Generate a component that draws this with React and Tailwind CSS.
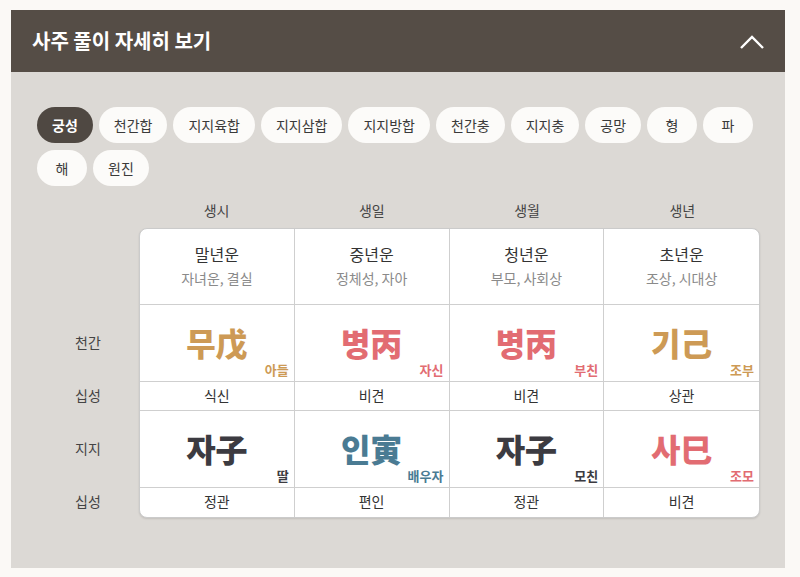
import React from "react";

const FONT = { fontFamily: '"Noto Sans CJK KR", "Noto Sans", sans-serif' };

const chips = ["궁성", "천간합", "지지육합", "지지삼합", "지지방합", "천간충", "지지충", "공망", "형", "파", "해", "원진"];

const cols = [
  { head: "생시", t1: "말년운", t2: "자녀운, 결실", g: "무戊", gs: "아들", gc: "text-[#cd9a55]", s1: "식신", j: "자子", js: "딸", jc: "text-[#3c3b41]", s2: "정관" },
  { head: "생일", t1: "중년운", t2: "정체성, 자아", g: "병丙", gs: "자신", gc: "text-[#e26c72]", s1: "비견", j: "인寅", js: "배우자", jc: "text-[#4a7b93]", s2: "편인" },
  { head: "생월", t1: "청년운", t2: "부모, 사회상", g: "병丙", gs: "부친", gc: "text-[#e26c72]", s1: "비견", j: "자子", js: "모친", jc: "text-[#3c3b41]", s2: "정관" },
  { head: "생년", t1: "초년운", t2: "조상, 시대상", g: "기己", gs: "조부", gc: "text-[#cd9a55]", s1: "상관", j: "사巳", js: "조모", jc: "text-[#e26c72]", s2: "비견" },
];

function BigCell({ text, sub, color, last }) {
  return (
    <div className={`relative flex h-full items-center justify-center pb-[2px] ${last ? "" : "border-r border-[#cfcfcf]"}`}>
      <span className={`text-[32px] font-black leading-none ${color}`}>{text}</span>
      <span className={`absolute right-[5px] bottom-[5px] text-[13px] font-bold leading-none ${color}`}>{sub}</span>
    </div>
  );
}

export default function App() {
  return (
    <div className="min-h-[577px] bg-[#fbf9f6] pt-[10px]" style={FONT}>
      <div className="ml-[11px] w-[774px]">
        <div className="flex h-[62px] items-center justify-between bg-[#554d46] pl-[21px] pr-[20px]">
          <span className="text-[20px] font-bold text-white">사주 풀이 자세히 보기</span>
          <svg width="26" height="17" viewBox="0 0 26 17">
            <polyline points="2,15 13,4 24,15" fill="none" stroke="white" strokeWidth="2.4" />
          </svg>
        </div>
        <div className="h-[496px] bg-[#dcd9d5] pl-[26px] pr-[16px] pt-[35px]">
          <div className="flex flex-wrap gap-x-[6px] gap-y-[7px] pr-[4px]">
            {chips.map((c, i) => (
              <div
                key={c}
                className={`flex h-[36px] min-w-[50px] items-center justify-center rounded-full px-[15px] text-[14px] ${
                  i === 0 ? "bg-[#4f4842] font-bold text-white" : "bg-[#fcfbf9] text-[#3a3a3a]"
                }`}
              >
                {c}
              </div>
            ))}
          </div>

          <div className="mt-[12px] flex">
            <div className="w-[102px]">
              <div className="h-[30px]" />
              <div className="h-[77px]" />
              <div className="flex h-[77px] items-center justify-center pb-[3px] text-[14px] text-[#444]">천간</div>
              <div className="flex h-[29px] items-center justify-center pb-[2px] text-[14px] text-[#444]">십성</div>
              <div className="flex h-[77px] items-center justify-center pb-[3px] text-[14px] text-[#444]">지지</div>
              <div className="flex h-[29px] items-center justify-center pb-[2px] text-[14px] text-[#444]">십성</div>
            </div>
            <div className="w-[621px]">
              <div className="grid h-[30px] grid-cols-4 pb-[5px]">
                {cols.map((c) => (
                  <div key={c.head} className="flex items-center justify-center text-[14px] text-[#444]">
                    {c.head}
                  </div>
                ))}
              </div>
              <div className="overflow-hidden rounded-[8px] border border-[#cbcbcb] bg-white shadow-[0_1px_2px_rgba(0,0,0,0.12)]">
                <div className="grid h-[76px] grid-cols-4 border-b border-[#cfcfcf]">
                  {cols.map((c, i) => (
                    <div key={i} className={`flex flex-col items-center justify-center pb-[3px] ${i < 3 ? "border-r border-[#cfcfcf]" : ""}`}>
                      <span className="text-[16px] leading-[22px] text-[#333]">{c.t1}</span>
                      <span className="mt-[3px] text-[14px] leading-[20px] text-[#8a8a8a]">{c.t2}</span>
                    </div>
                  ))}
                </div>
                <div className="grid h-[77px] grid-cols-4 border-b border-[#cfcfcf]">
                  {cols.map((c, i) => (
                    <BigCell key={i} text={c.g} sub={c.gs} color={c.gc} last={i === 3} />
                  ))}
                </div>
                <div className="grid h-[29px] grid-cols-4 border-b border-[#cfcfcf]">
                  {cols.map((c, i) => (
                    <div key={i} className={`flex items-center justify-center pb-[2px] text-[14px] text-[#333] ${i < 3 ? "border-r border-[#cfcfcf]" : ""}`}>
                      {c.s1}
                    </div>
                  ))}
                </div>
                <div className="grid h-[77px] grid-cols-4 border-b border-[#cfcfcf]">
                  {cols.map((c, i) => (
                    <BigCell key={i} text={c.j} sub={c.js} color={c.jc} last={i === 3} />
                  ))}
                </div>
                <div className="grid h-[29px] grid-cols-4">
                  {cols.map((c, i) => (
                    <div key={i} className={`flex items-center justify-center pb-[2px] text-[14px] text-[#333] ${i < 3 ? "border-r border-[#cfcfcf]" : ""}`}>
                      {c.s2}
                    </div>
                  ))}
                </div>
              </div>
            </div>
          </div>
        </div>
      </div>
    </div>
  );
}
